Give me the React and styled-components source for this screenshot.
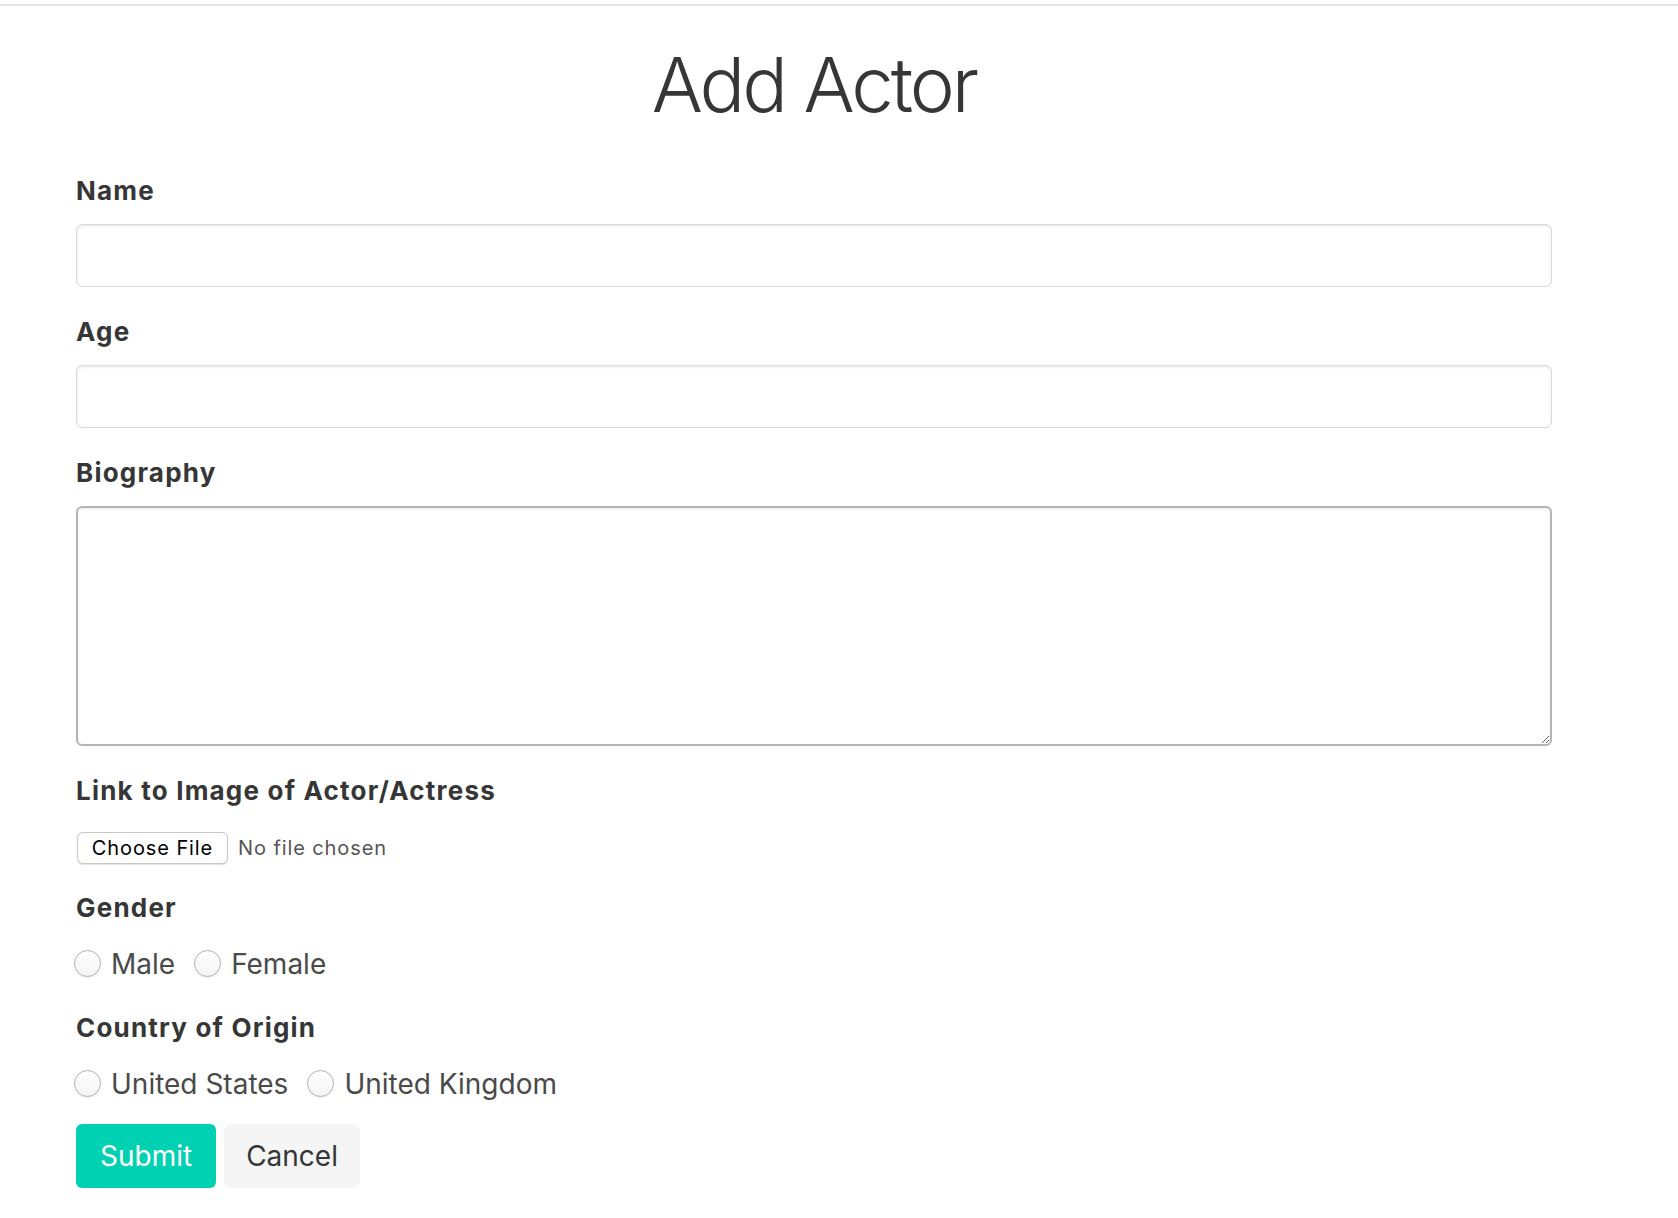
import React from 'react';
import styled, { createGlobalStyle } from 'styled-components';

const GlobalStyle = createGlobalStyle`
  html, body {
    margin: 0;
    padding: 0;
    background: #fff;
  }
  body {
    font-family: Inter, "Noto Sans", "Liberation Sans", sans-serif;
    color: #363636;
  }
  * { box-sizing: border-box; }
`;

const Page = styled.div`
  min-height: 1218px;
  background: #fff;
`;

const TopRule = styled.div`
  height: 6px;
  border-bottom: 2px solid #e5e5e5;
`;

const Container = styled.form`
  width: 1476px;
  margin: 0 0 0 76px;
  padding-bottom: 30px;
`;

const Title = styled.h1`
  margin: 36px 0 45px;
  font-size: 76px;
  font-weight: 300;
  line-height: 1.125;
  letter-spacing: -3px;
  color: #363636;
  text-align: center;
`;

const Field = styled.div`
  margin-bottom: ${p => p.$mb ?? 27}px;
`;

const Label = styled.label`
  display: block;
  margin-bottom: ${p => p.$gap ?? 15}px;
  font-size: 26px;
  font-weight: 700;
  line-height: 36px;
  letter-spacing: 1.2px;
  color: #363636;
`;

const Input = styled.input`
  display: block;
  width: 100%;
  height: 63px;
  padding: 0 18px;
  border: 1px solid #dbdbdb;
  border-radius: 6px;
  box-shadow: inset 0 1px 3px rgba(10, 10, 10, 0.1);
  font: inherit;
  font-size: 26px;
  color: #363636;
  outline: none;
`;

const TextArea = styled.textarea`
  display: block;
  width: 100%;
  height: 240px;
  padding: 14px 18px;
  border: 2px solid #b5b5b5;
  border-radius: 6px;
  box-shadow: inset 0 1px 3px rgba(10, 10, 10, 0.08);
  font: inherit;
  font-size: 26px;
  color: #363636;
  outline: none;
  resize: vertical;
`;

const FileRow = styled.div`
  display: flex;
  align-items: center;
  gap: 10px;
  height: 32px;
`;

const HiddenFile = styled.input`
  display: none;
`;

const FileButton = styled.label`
  display: inline-flex;
  align-items: center;
  justify-content: center;
  width: 151px;
  height: 32px;
  margin-left: 1px;
  border: 1px solid #c6c6c6;
  border-radius: 6px;
  background: #fff;
  box-shadow: 0 1px 1px rgba(0, 0, 0, 0.12);
  font-size: 20px;
  letter-spacing: 0.9px;
  color: #000;
  cursor: pointer;
`;

const FileStatus = styled.span`
  font-size: 20px;
  letter-spacing: 0.9px;
  color: #555;
`;

const RadioGroup = styled.div`
  display: flex;
  align-items: center;
  height: 40px;
  margin-left: -2px;
`;

const RadioOption = styled.label`
  display: inline-flex;
  align-items: center;
  margin-right: 19px;
  cursor: pointer;
`;

const RadioCircle = styled.input`
  appearance: none;
  width: 27px;
  height: 27px;
  margin: 0 10px 0 0;
  border: 1px solid #b2b2b2;
  border-radius: 50%;
  background: linear-gradient(#ffffff, #f4f4f4);
  box-shadow: 0 1px 1px rgba(0, 0, 0, 0.06);
  cursor: pointer;
`;

const RadioText = styled.span`
  font-size: 28px;
  line-height: 40px;
  color: #4a4a4a;
`;

const Actions = styled.div`
  display: flex;
  gap: 8px;
`;

const Button = styled.button`
  height: 64px;
  padding: 0 ${p => (p.$primary ? 24 : 22)}px;
  border: none;
  border-radius: 6px;
  font: inherit;
  font-size: 28px;
  background: ${p => (p.$primary ? '#00d1b2' : '#f5f5f5')};
  color: ${p => (p.$primary ? '#fff' : '#363636')};
  cursor: pointer;
`;

export default function App() {
  return (
    <Page>
      <GlobalStyle />
      <TopRule />
      <Container onSubmit={e => e.preventDefault()}>
        <Title>Add Actor</Title>

        <Field>
          <Label htmlFor="name">Name</Label>
          <Input id="name" type="text" />
        </Field>

        <Field>
          <Label htmlFor="age">Age</Label>
          <Input id="age" type="text" />
        </Field>

        <Field>
          <Label htmlFor="bio">Biography</Label>
          <TextArea id="bio" />
        </Field>

        <Field $mb={26}>
          <Label $gap={23}>Link to Image of Actor/Actress</Label>
          <FileRow>
            <FileButton htmlFor="image">Choose File</FileButton>
            <HiddenFile id="image" type="file" />
            <FileStatus>No file chosen</FileStatus>
          </FileRow>
        </Field>

        <Field $mb={26}>
          <Label $gap={18}>Gender</Label>
          <RadioGroup>
            <RadioOption>
              <RadioCircle type="radio" name="gender" value="male" />
              <RadioText>Male</RadioText>
            </RadioOption>
            <RadioOption>
              <RadioCircle type="radio" name="gender" value="female" />
              <RadioText>Female</RadioText>
            </RadioOption>
          </RadioGroup>
        </Field>

        <Field $mb={20}>
          <Label $gap={18}>Country of Origin</Label>
          <RadioGroup>
            <RadioOption>
              <RadioCircle type="radio" name="country" value="us" />
              <RadioText>United States</RadioText>
            </RadioOption>
            <RadioOption>
              <RadioCircle type="radio" name="country" value="uk" />
              <RadioText>United Kingdom</RadioText>
            </RadioOption>
          </RadioGroup>
        </Field>

        <Actions>
          <Button type="submit" $primary>Submit</Button>
          <Button type="button">Cancel</Button>
        </Actions>
      </Container>
    </Page>
  );
}
